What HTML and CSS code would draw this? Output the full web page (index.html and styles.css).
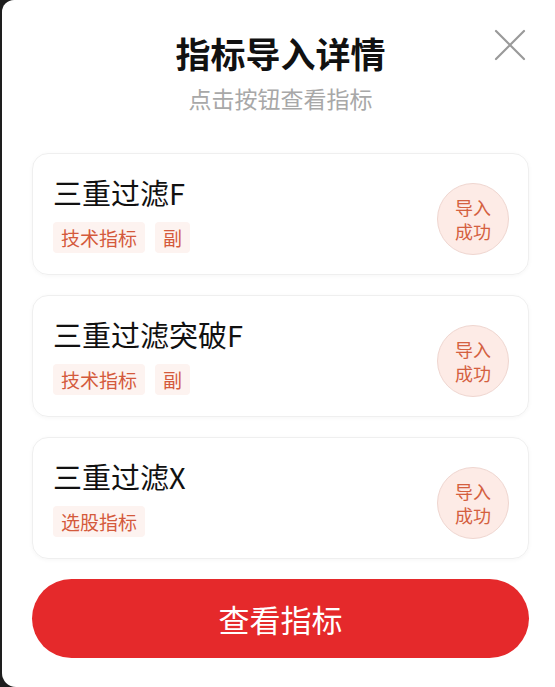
FILE: index.html
```html
<!DOCTYPE html>
<html lang="zh-CN">
<head>
    <meta charset="UTF-8">
    <meta name="viewport" content="width=device-width, initial-scale=1.0">
    <title>指标导入详情</title>
    <link rel="stylesheet" href="styles.css">
</head>
<body>
    <div class="sheet">
        <div class="sheet-head">
            <h1 class="sheet-title">指标导入详情</h1>
            <p class="sheet-sub">点击按钮查看指标</p>
            <button class="close-btn" aria-label="关闭">
                <svg viewBox="0 0 32 32" width="32" height="32">
                    <path d="M2 2L30 30M30 2L2 30" stroke="#9a9a9a" stroke-width="2.2" fill="none" stroke-linecap="round"/>
                </svg>
            </button>
        </div>

        <div class="import-list">
            <div class="import-card">
                <div class="card-info">
                    <div class="card-name">三重过滤F</div>
                    <div class="tag-row">
                        <span class="tag">技术指标</span>
                        <span class="tag">副</span>
                    </div>
                </div>
                <div class="status-badge"><span>导入</span><span>成功</span></div>
            </div>
            <div class="import-card">
                <div class="card-info">
                    <div class="card-name">三重过滤突破F</div>
                    <div class="tag-row">
                        <span class="tag">技术指标</span>
                        <span class="tag">副</span>
                    </div>
                </div>
                <div class="status-badge"><span>导入</span><span>成功</span></div>
            </div>
            <div class="import-card">
                <div class="card-info">
                    <div class="card-name">三重过滤X</div>
                    <div class="tag-row">
                        <span class="tag">选股指标</span>
                    </div>
                </div>
                <div class="status-badge"><span>导入</span><span>成功</span></div>
            </div>
        </div>

        <button class="view-btn">查看指标</button>
    </div>
</body>
</html>
```

FILE: styles.css
```css
/* bottom sheet: import result of indicators */
body, html { margin: 0; padding: 0; background: #1e1e1e; font-family: "Noto Sans CJK SC", "Noto Sans", sans-serif; overflow: hidden; }
.sheet { margin-left: 2px; height: 100vh; box-sizing: border-box; background: #fff; border-radius: 12px 0 0 14px; padding: 33px 26px 0 30px; display: flex; flex-direction: column; }
.sheet-head { position: relative; text-align: center; }
.sheet-title { margin: 0; font-size: 35px; line-height: 40px; font-weight: 700; color: #111; }
.sheet-sub { margin: 10px 0 0; font-size: 23px; line-height: 30px; color: #a8a8a8; }
.close-btn { position: absolute; right: 3px; top: -4px; width: 32px; height: 32px; padding: 0; border: none; background: none; }
.close-btn svg { display: block; }

.import-list { margin-top: 40px; display: flex; flex-direction: column; gap: 20px; }
.import-card { height: 122px; box-sizing: border-box; border: 1px solid #efefef; border-radius: 16px; box-shadow: 0 1px 4px rgba(0, 0, 0, 0.04); padding: 20px 19px 0 20px; display: flex; justify-content: space-between; }
.card-name { font-size: 29px; line-height: 36px; color: #111; }
.tag-row { display: flex; gap: 10px; margin-top: 12px; }
.tag { background: #fdf3f0; color: #d45a3c; font-size: 19px; line-height: 31px; height: 31px; padding: 0 8px; border-radius: 4px; }
.status-badge { width: 72px; height: 72px; margin-top: 9px; box-sizing: border-box; border-radius: 50%; background: #fdebe6; border: 1px solid #efd6d0; color: #d4603f; font-size: 18px; display: flex; flex-direction: column; align-items: center; justify-content: center; }
.status-badge span { display: block; line-height: 24px; height: 24px; overflow: hidden; }

.view-btn { margin-top: 20px; height: 79px; border: none; border-radius: 40px; background: #e5292b; color: #fff; font-family: inherit; font-size: 31px; }
```
